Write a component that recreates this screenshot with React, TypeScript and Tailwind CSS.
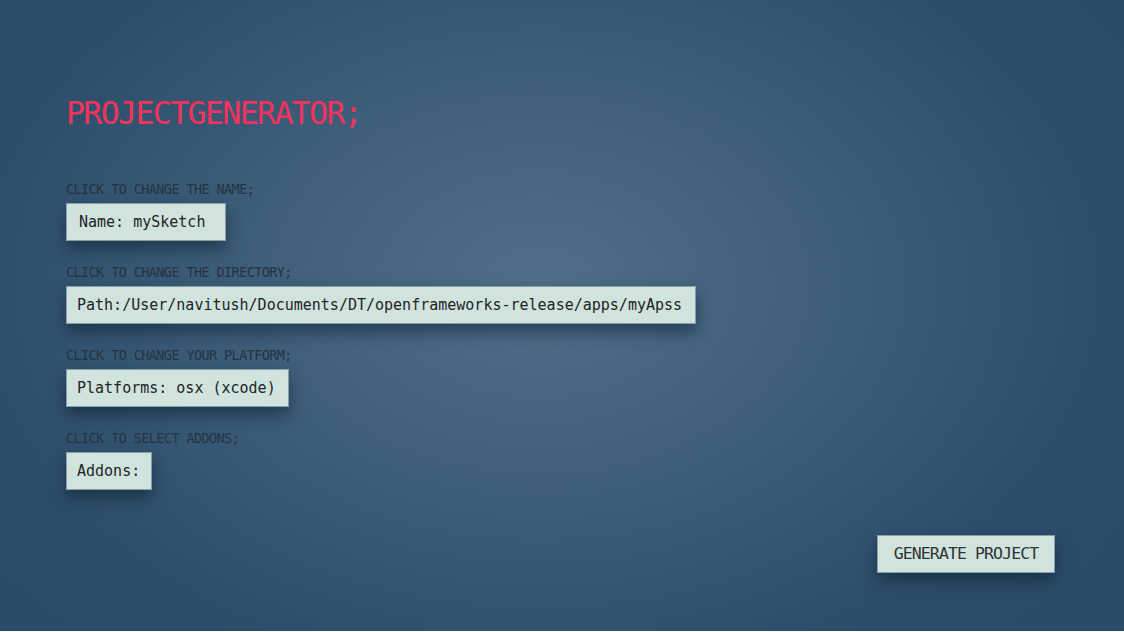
const mono = "font-['DejaVu_Sans_Mono','Liberation_Mono',monospace]"

const fields = [
  { label: "CLICK TO CHANGE THE NAME;", value: "Name: mySketch", width: "w-[160px]", pad: "pl-[12px]" },
  {
    label: "CLICK TO CHANGE THE DIRECTORY;",
    value: "Path:/User/navitush/Documents/DT/openframeworks-release/apps/myApss",
    width: "w-[630px]",
    pad: "pl-[10px]",
  },
  { label: "CLICK TO CHANGE YOUR PLATFORM;", value: "Platforms: osx (xcode)", width: "w-[223px]", pad: "pl-[10px]" },
  { label: "CLICK TO SELECT ADDONS;", value: "Addons:", width: "w-[86px]", pad: "pl-[10px]" },
]

const Field = ({ label, value, width, pad }: { label: string; value: string; width: string; pad: string }) => (
  <div className="flex flex-col items-start">
    <p className={`${mono} text-[13.5px] leading-[16px] tracking-[-0.6px] text-[#243442] mb-[6px]`}>
      {label}
    </p>
    <button
      className={`${mono} ${width} ${pad} h-[38px] flex items-center text-left text-[15px] text-[#1d2327] bg-[#d0e3dd] border border-[#86a0ab] shadow-[0_8px_16px_rgba(10,25,40,0.5)] whitespace-nowrap`}
    >
      {value}
    </button>
  </div>
)

export default function App() {
  return (
    <main className="h-[631px] w-full overflow-hidden bg-[radial-gradient(ellipse_60%_75%_at_48%_45%,#4f6e89_0%,#3f5f7b_40%,#2c4d6a_85%,#2b4c69_100%)]">
      <div className="pl-[66px] pt-[97px]">
        <h1 className={`${mono} text-[31.5px] leading-[32px] tracking-[-1.6px] text-[#f2335e]`}>
          PROJECTGENERATOR;
        </h1>
        <div className="mt-[52px] flex flex-col gap-[23px]">
          {fields.map((f, i) => (
            <Field key={i} {...f} />
          ))}
        </div>
      </div>
      <div className="flex justify-end pr-[69px] mt-[45px]">
        <button
          className={`${mono} w-[178px] h-[38px] flex items-center justify-center text-[16.5px] tracking-[-0.9px] text-[#2f3436] bg-[#d0e3dd] border border-[#86a0ab] shadow-[0_8px_16px_rgba(10,25,40,0.5)]`}
        >
          GENERATE PROJECT
        </button>
      </div>
    </main>
  )
}
